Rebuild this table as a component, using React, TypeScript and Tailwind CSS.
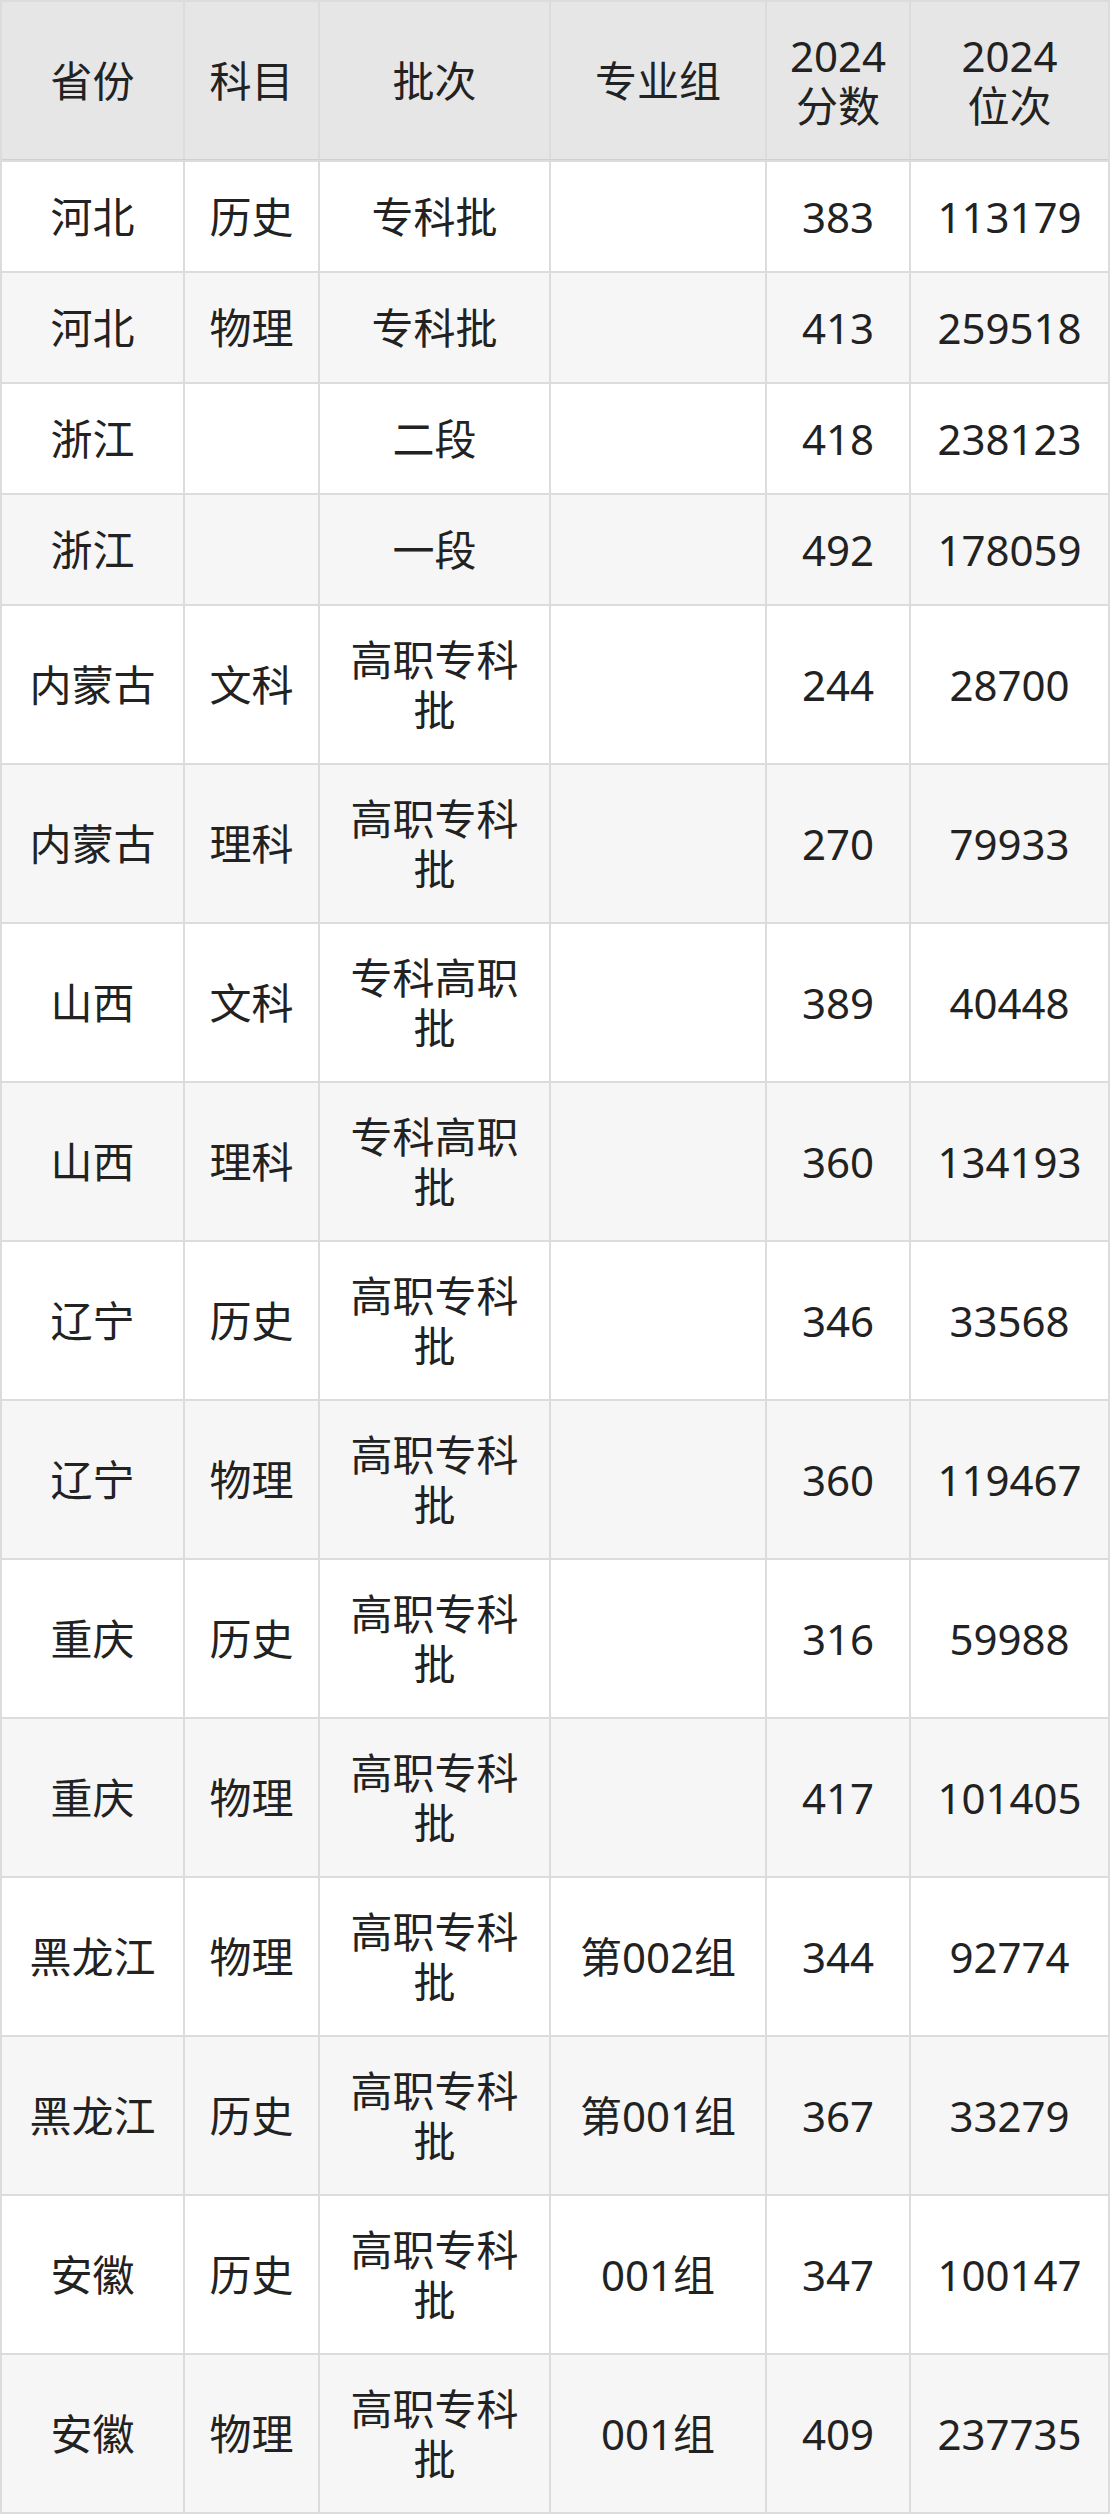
import React from "react";

type Row = [string, string, string, string, string, string];

const rows: Row[] = [
  ["河北", "历史", "专科批", "", "383", "113179"],
  ["河北", "物理", "专科批", "", "413", "259518"],
  ["浙江", "", "二段", "", "418", "238123"],
  ["浙江", "", "一段", "", "492", "178059"],
  ["内蒙古", "文科", "高职专科\n批", "", "244", "28700"],
  ["内蒙古", "理科", "高职专科\n批", "", "270", "79933"],
  ["山西", "文科", "专科高职\n批", "", "389", "40448"],
  ["山西", "理科", "专科高职\n批", "", "360", "134193"],
  ["辽宁", "历史", "高职专科\n批", "", "346", "33568"],
  ["辽宁", "物理", "高职专科\n批", "", "360", "119467"],
  ["重庆", "历史", "高职专科\n批", "", "316", "59988"],
  ["重庆", "物理", "高职专科\n批", "", "417", "101405"],
  ["黑龙江", "物理", "高职专科\n批", "第002组", "344", "92774"],
  ["黑龙江", "历史", "高职专科\n批", "第001组", "367", "33279"],
  ["安徽", "历史", "高职专科\n批", "001组", "347", "100147"],
  ["安徽", "物理", "高职专科\n批", "001组", "409", "237735"],
];

const header = ["省份", "科目", "批次", "专业组", "2024\n分数", "2024\n位次"];

const gridCols =
  "grid grid-cols-[181px_133px_229px_214px_142px_197px] gap-x-[2px]";

export default function App() {
  return (
    <div
      className="w-[1110px] bg-[#dcdcdc] p-[2px] flex flex-col gap-y-[2px] text-[42px] leading-[50px] text-[#222222]"
      style={{ fontFamily: '"Noto Sans", "Noto Sans CJK SC", sans-serif' }}
    >
      <div className={`${gridCols} h-[158px] border-b border-[#d0d0d0]`}>
        {header.map((h, i) => (
          <div
            key={i}
            className="bg-[#e6e6e6] flex items-center justify-center text-center whitespace-pre-line"
          >
            {h}
          </div>
        ))}
      </div>
      {rows.map((r, ri) => {
        const double = r[2].includes("\n");
        const bg = ri % 2 === 0 ? "bg-white" : "bg-[#f6f6f6]";
        return (
          <div
            key={ri}
            className={`${gridCols} ${double ? "h-[157px]" : "h-[109px]"}`}
          >
            {r.map((c, ci) => (
              <div
                key={ci}
                className={`${bg} flex items-center justify-center text-center whitespace-pre-line`}
              >
                {c}
              </div>
            ))}
          </div>
        );
      })}
    </div>
  );
}
